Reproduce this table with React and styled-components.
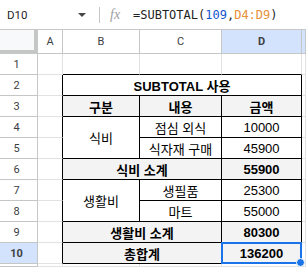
import React from 'react';
import styled, { createGlobalStyle } from 'styled-components';

const GlobalStyle = createGlobalStyle`
  body {
    margin: 0;
    background: #fff;
    font-family: "Liberation Sans", "Noto Sans CJK KR", sans-serif;
  }
`;

const Sheet = styled.div`
  width: 306px;
  height: 267px;
  overflow: hidden;
  background: #fff;
`;

const FormulaBar = styled.div`
  display: flex;
  align-items: center;
  height: 30px;
  box-sizing: border-box;
  border-bottom: 1px solid #c7c7c7;
`;

const NameBox = styled.div`
  display: flex;
  align-items: center;
  width: 99px;
  box-sizing: border-box;
  padding-left: 7px;
  font-family: Roboto, "Liberation Sans", sans-serif;
  font-size: 11.5px;
  color: #1f1f1f;
`;

const NameText = styled.span`
  flex: 1;
`;

const Caret = styled.span`
  width: 0;
  height: 0;
  margin-right: 13px;
  border-left: 4px solid transparent;
  border-right: 4px solid transparent;
  border-top: 4px solid #444746;
`;

const Divider = styled.div`
  width: 1px;
  height: 16px;
  background: #c4c7c5;
`;

const Fx = styled.span`
  margin-left: 10px;
  width: 14px;
  font-family: "Liberation Serif", serif;
  font-style: italic;
  font-size: 14px;
  color: #a0a0a0;
`;

const Formula = styled.div`
  margin-left: 9px;
  font-family: "DejaVu Sans Mono", "Liberation Mono", monospace;
  font-size: 12px;
  color: #1f1f1f;
  white-space: pre;
`;

const Token = styled.span`
  color: ${p => p.$tone === 'num' ? '#1155cc' : p.$tone === 'ref' ? '#e69138' : 'inherit'};
`;

const Grid = styled.div`
  display: grid;
  grid-template-columns: 38px 25px 77px 82px 80px 1fr;
  grid-template-rows: 24px repeat(10, 21px) 1fr;
  height: 237px;
`;

const Corner = styled.div`
  box-sizing: border-box;
  background: #f8f9fa;
  border-right: 4px solid #c4c7c5;
  border-bottom: 4px solid #c4c7c5;
`;

const ColHead = styled.div`
  display: flex;
  align-items: center;
  justify-content: center;
  box-sizing: border-box;
  border-right: 1px solid #c4c7c5;
  border-bottom: 1px solid #c4c7c5;
  background: ${p => p.$active ? '#d3e3fd' : '#fff'};
  font-family: Roboto, "Liberation Sans", sans-serif;
  font-size: 11px;
  font-weight: ${p => p.$active ? 700 : 400};
  color: #3c4043;
`;

const RowHead = styled.div`
  display: flex;
  align-items: center;
  justify-content: center;
  box-sizing: border-box;
  padding-right: 4px;
  border-right: 1px solid #c4c7c5;
  border-bottom: 1px solid #c4c7c5;
  background: ${p => p.$active ? '#d3e3fd' : '#fff'};
  font-family: Roboto, "Liberation Sans", sans-serif;
  font-size: 11px;
  font-weight: ${p => p.$active ? 700 : 400};
  color: #3c4043;
`;

const Blank = styled.div`
  box-sizing: border-box;
  border-right: 1px solid ${p => p.$edgeRight ? '#000' : '#e2e2e2'};
  border-bottom: 1px solid ${p => p.$edgeBottom ? '#000' : '#e2e2e2'};
`;

const Cell = styled.div`
  position: relative;
  display: flex;
  align-items: center;
  justify-content: center;
  box-sizing: border-box;
  grid-column: span ${p => p.$cols || 1};
  grid-row: span ${p => p.$rows || 1};
  border-right: 1px solid #000;
  border-bottom: 1px solid #000;
  background: ${p => p.$shade ? '#f3f3f3' : '#fff'};
  font-size: 13px;
  font-weight: ${p => p.$bold ? 700 : 400};
  color: #000;
  white-space: nowrap;
`;

const Selection = styled.div`
  position: absolute;
  inset: -1px;
  border: 2px solid #1a73e8;
  pointer-events: none;
`;

const Handle = styled.div`
  position: absolute;
  right: -5px;
  bottom: -5px;
  width: 7px;
  height: 7px;
  border-radius: 50%;
  background: #1a73e8;
  border: 1px solid #fff;
`;

const columns = ['A', 'B', 'C', 'D'];

const tableRows = [
  [{ text: 'SUBTOTAL 사용', cols: 3, bold: true }],
  [
    { text: '구분', bold: true, shade: true },
    { text: '내용', bold: true, shade: true },
    { text: '금액', bold: true, shade: true },
  ],
  [{ text: '식비', rows: 2 }, { text: '점심 외식' }, { text: '10000' }],
  [{ text: '식자재 구매' }, { text: '45900' }],
  [{ text: '식비 소계', cols: 2, bold: true, shade: true }, { text: '55900', bold: true, shade: true }],
  [{ text: '생활비', rows: 2 }, { text: '생필품' }, { text: '25300' }],
  [{ text: '마트' }, { text: '55000' }],
  [{ text: '생활비 소계', cols: 2, bold: true, shade: true }, { text: '80300', bold: true, shade: true }],
  [{ text: '총합계', cols: 2, bold: true, shade: true }, { text: '136200', bold: true, shade: true, selected: true }],
];

export default function App() {
  return (
    <Sheet>
      <GlobalStyle />
      <FormulaBar>
        <NameBox>
          <NameText>D10</NameText>
          <Caret />
        </NameBox>
        <Divider />
        <Fx>fx</Fx>
        <Formula>
          =SUBTOTAL(<Token $tone="num">109</Token>,<Token $tone="ref">D4:D9</Token>)
        </Formula>
      </FormulaBar>
      <Grid>
        <Corner />
        {columns.map(c => (
          <ColHead key={c} $active={c === 'D'}>{c}</ColHead>
        ))}
        <ColHead $active />

        <RowHead>1</RowHead>
        <Blank />
        <Blank $edgeBottom />
        <Blank $edgeBottom />
        <Blank $edgeBottom />
        <Blank />

        {tableRows.map((cells, i) => (
          <React.Fragment key={i}>
            <RowHead $active={i === 8}>{i + 2}</RowHead>
            <Blank $edgeRight />
            {cells.map((c, j) => (
              <Cell key={j} $cols={c.cols} $rows={c.rows} $bold={c.bold} $shade={c.shade}>
                {c.text}
                {c.selected && (
                  <Selection>
                    <Handle />
                  </Selection>
                )}
              </Cell>
            ))}
            <Blank />
          </React.Fragment>
        ))}

        <RowHead />
        <Blank />
        <Blank />
        <Blank />
        <Blank />
        <Blank />
      </Grid>
    </Sheet>
  );
}
